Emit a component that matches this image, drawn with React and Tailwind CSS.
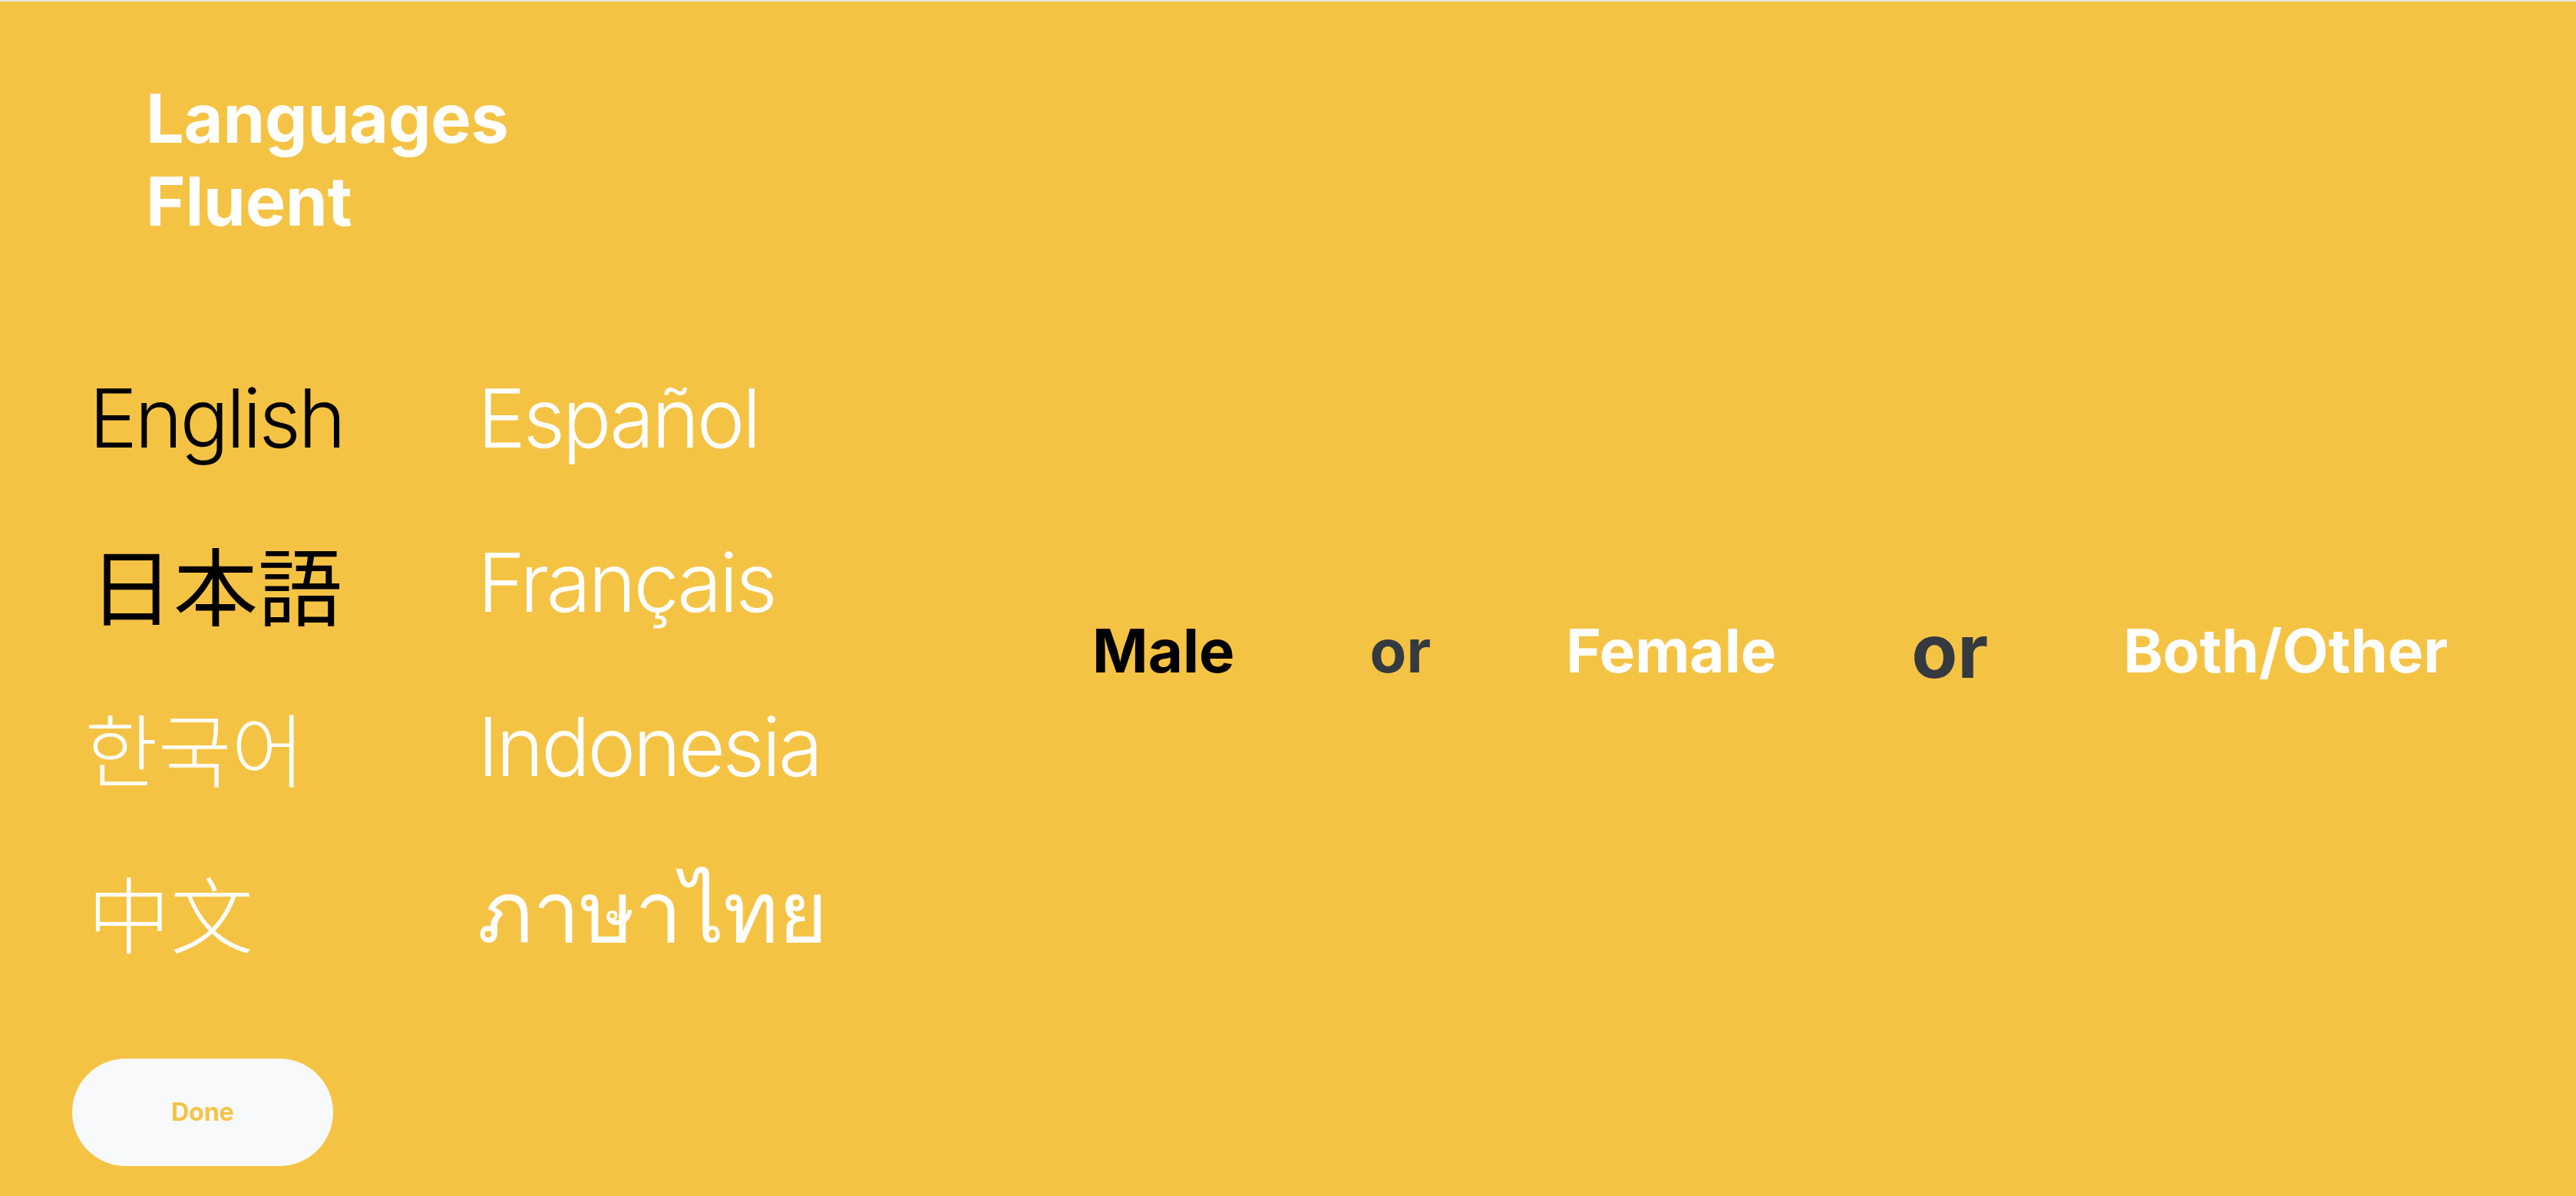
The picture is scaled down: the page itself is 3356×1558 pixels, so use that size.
const LANGUAGES = [
  { label: 'English', active: true },
  { label: 'Español', active: false },
  { label: '日本語', active: true, cjk: 'jp' },
  { label: 'Français', active: false },
  { label: '한국어', active: false, cjk: 'kr' },
  { label: 'Indonesia', active: false },
  { label: '中文', active: false, cjk: 'sc' },
  { label: 'ภาษาไทย', active: false, cjk: 'th' },
]

// per-script font tweaks so each label sits like the mock
const SCRIPT_FONTS = {
  jp: 'text-[110px] font-["Noto_Sans_CJK_JP",sans-serif] font-normal',
  kr: 'text-[104px] -ml-[6px] font-["Noto_Sans_CJK_KR",sans-serif] font-light',
  sc: 'text-[108px] -ml-[2px] font-["Noto_Sans_CJK_SC",sans-serif] font-light',
  th: 'text-[110px] font-light tracking-[-1px]',
}

export default function App() {
  return (
    <div className="flex h-[1558px] w-full border-t-2 border-[#e4e4e4] bg-[#f5c344] font-['Inter',sans-serif]">
      <div className="flex w-[1230px] shrink-0 flex-col">
        <h1 className="pl-[190px] pt-[98px] text-[88px] font-bold leading-[108px] tracking-[-0.2px] text-white">
          Languages
          <br />
          Fluent
        </h1>

        <div className="mt-[122px] grid grid-cols-[506px_1fr] pl-[116px]">
          {LANGUAGES.map((lang) => (
            <div
              key={lang.label}
              className={`flex h-[214px] items-center leading-none ${
                lang.active ? 'text-black' : 'text-white'
              } ${lang.cjk ? SCRIPT_FONTS[lang.cjk] : 'text-[106px] font-light tracking-[-3.5px]'}`}
            >
              {lang.label}
            </div>
          ))}
        </div>

        <div className="mt-auto pb-[39px] pl-[94px]">
          <button
            type="button"
            className="flex h-[140px] w-[340px] items-center justify-center rounded-full bg-[#f8f9fb] text-[32px] font-bold text-[#f5c344]"
          >
            Done
          </button>
        </div>
      </div>

      <div className="flex flex-1 items-center pl-[193px] pt-[135px]">
        <div className="flex items-center gap-[176px] font-bold">
          <span className="text-[78px] text-black">Male</span>
          <span className="text-[78px] text-[#343a40]">or</span>
          <span className="text-[78px] text-white">Female</span>
          <span className="text-[98px] text-[#343a40]">or</span>
          <span className="text-[78px] text-white">Both/Other</span>
        </div>
      </div>
    </div>
  )
}
